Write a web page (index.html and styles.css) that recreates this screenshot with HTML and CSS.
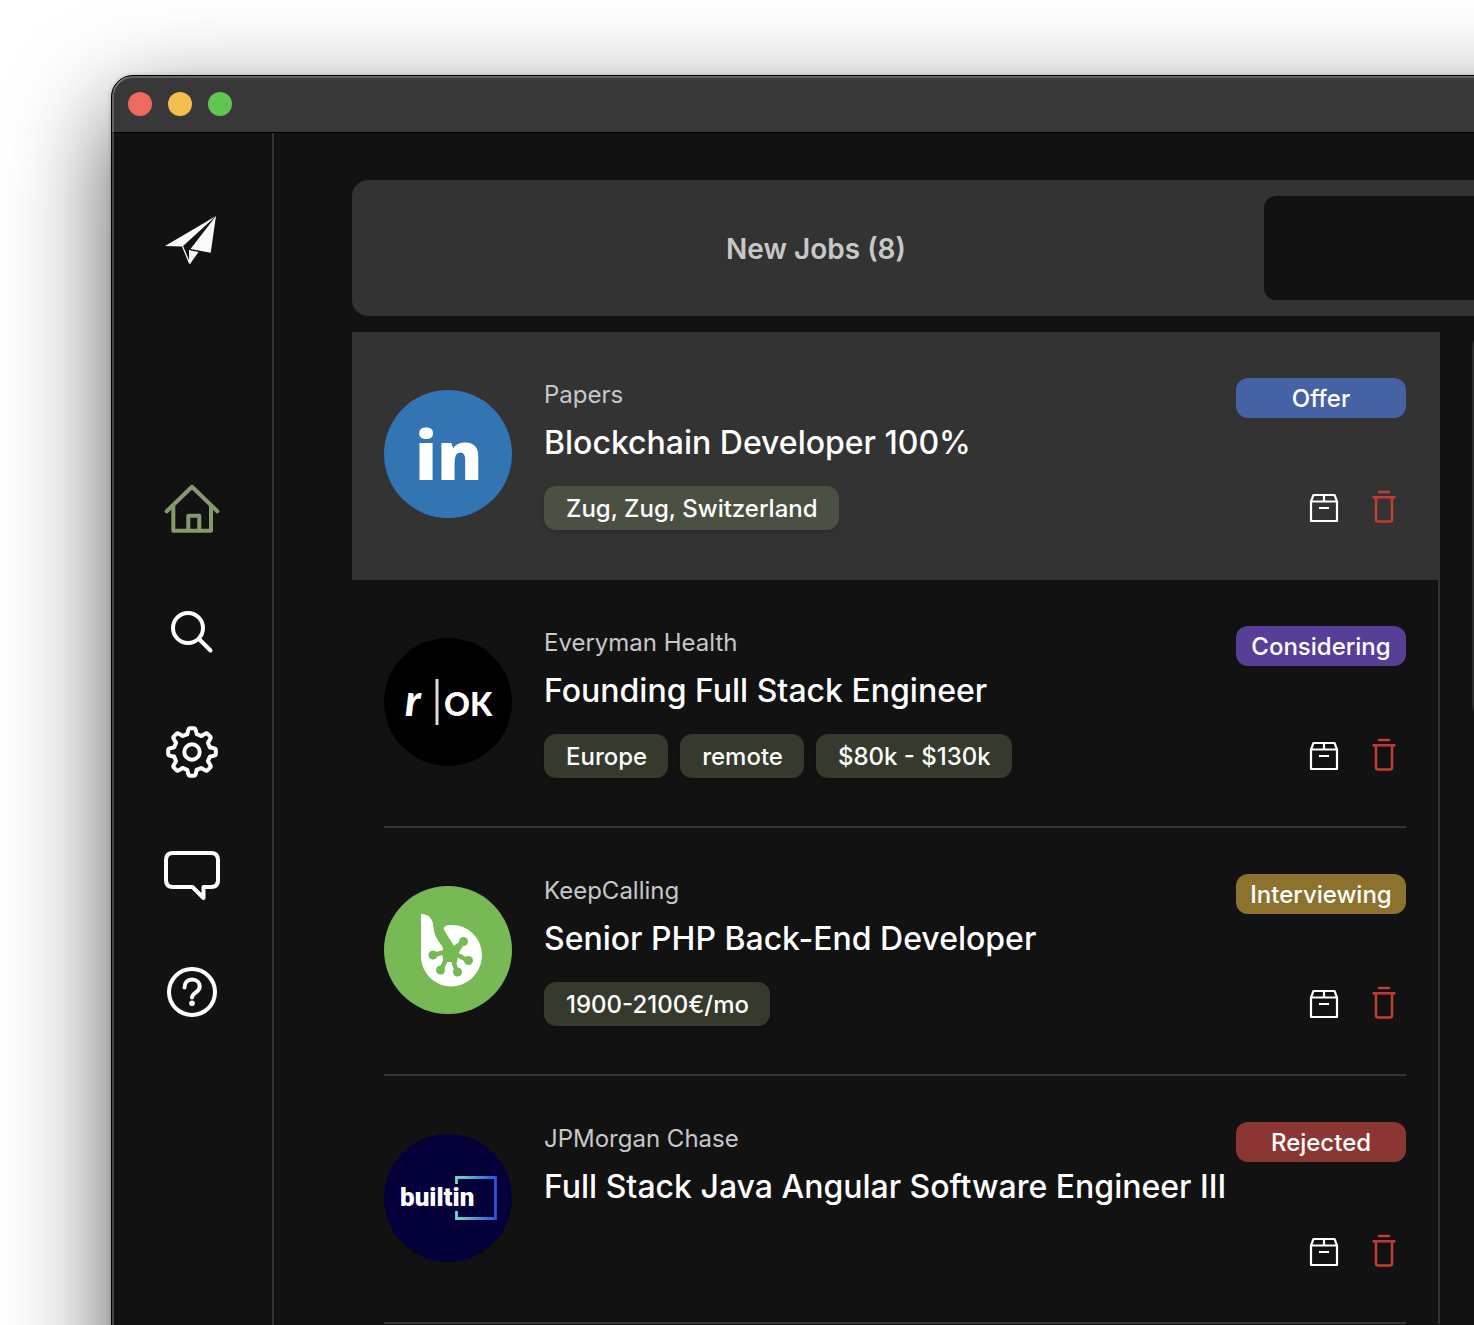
FILE: index.html
```html
<!DOCTYPE html>
<html lang="en">
<head>
<meta charset="utf-8">
<title>Jobs</title>
<link rel="stylesheet" href="styles.css">
</head>
<body>
<svg class="sprite" aria-hidden="true">
  <symbol id="archive" viewBox="0 0 44 44">
    <g fill="none" stroke="currentColor" stroke-width="2.200" stroke-linejoin="round">
      <path d="M9 15.500V35h26V15.500L32.500 9h-21z"/><path d="M9 15.500h26M22 9v6.500M17 22h10"/>
    </g>
  </symbol>
  <symbol id="trash" viewBox="0 0 44 44">
    <g fill="none" stroke="currentColor" stroke-width="2.500" stroke-linejoin="round" stroke-linecap="round">
      <path d="M17 6h10M11.500 11.300h21M14 12v21.500q0 2 2 2h12q2 0 2-2V12"/>
    </g>
  </symbol>
</svg>
<div class="window">
  <header class="titlebar">
    <button class="light close" aria-label="Close"></button>
    <button class="light minimize" aria-label="Minimize"></button>
    <button class="light maximize" aria-label="Maximize"></button>
  </header>
  <div class="app">
    <nav class="sidebar">
      <svg class="logo" viewBox="0 0 64 64" fill="#fafafa">
        <path d="M5 38 56 8 22.500 38.500z"/>
        <path d="M56 8 50.700 44.700 30.500 41z"/>
        <path d="M29.500 42.300 38.500 44 30 56z"/>
        <path d="M22.500 38.200 29.700 55.500V42" fill="none" stroke="#fafafa" stroke-width="1.300"/>
      </svg>
      <ul class="menu">
        <li><a class="active" href="#home" aria-label="Home"><svg viewBox="0 0 64 64"><path d="M6.700 31.300 32 6.800l25.300 24.500M13.300 26v24.700H51V26M28.300 50V35.700h11V50"/></svg></a></li>
        <li><a href="#search" aria-label="Search"><svg viewBox="0 0 64 64"><circle cx="28" cy="28" r="15"/><path d="m39 39 11.500 11.500"/></svg></a></li>
        <li><a href="#settings" aria-label="Settings"><svg viewBox="-32 -32 64 64"><circle r="7.700"/>
          <defs><path id="tooth" d="M-4.800-17.800-3.600-22.300Q-3.200-23.800-1.800-23.800H1.800Q3.200-23.800 3.600-22.300L4.800-17.800 9.200-16"/></defs>
          <use href="#tooth"/><use href="#tooth" transform="rotate(45)"/><use href="#tooth" transform="rotate(90)"/><use href="#tooth" transform="rotate(135)"/><use href="#tooth" transform="rotate(180)"/><use href="#tooth" transform="rotate(225)"/><use href="#tooth" transform="rotate(270)"/><use href="#tooth" transform="rotate(315)"/>
        </svg></a></li>
        <li><a href="#feedback" aria-label="Feedback"><svg viewBox="0 0 64 64"><path d="M13 13h38q7 0 7 7v20q0 7-7 7h-7.500v11L32.500 47H13q-7 0-7-7V20q0-7 7-7z"/></svg></a></li>
        <li><a href="#help" aria-label="Help"><svg viewBox="0 0 64 64"><circle cx="32" cy="32" r="23"/><path d="M24.500 27.500c0-5 3-8 7.500-8s7.700 3 7.700 7c0 6-7.700 6-7.700 11"/><circle class="dot" cx="32" cy="43.300" r="2.800"/></svg></a></li>
      </ul>
    </nav>
    <main class="main">
      <div class="tabs">
        <button class="tab">New Jobs (8)</button>
        <button class="tab current" aria-label="Applied"></button>
        <button class="tab" aria-label="Archived"></button>
      </div>
      <div class="columns">
        <ul class="jobs">
          <li class="job selected">
            <div class="row">
              <svg class="avatar linkedin" viewBox="0 0 128 128"><text x="31" y="90">in</text></svg>
              <div class="info">
                <p class="company">Papers</p>
                <h2 class="title">Blockchain Developer 100%</h2>
                <div class="tags"><span class="tag">Zug, Zug, Switzerland</span></div>
              </div>
              <div class="side">
                <span class="badge offer">Offer</span>
                <div class="actions">
                  <button class="action" aria-label="Archive"><svg><use href="#archive"/></svg></button>
                  <button class="action delete" aria-label="Delete"><svg><use href="#trash"/></svg></button>
                </div>
              </div>
            </div>
          </li>
          <li class="job">
            <div class="row">
              <svg class="avatar rok" viewBox="0 0 128 128"><text class="script" x="21" y="78">r</text><path d="M53 41v46" stroke="#ddd" stroke-width="3"/><text x="60" y="78">OK</text></svg>
              <div class="info">
                <p class="company">Everyman Health</p>
                <h2 class="title">Founding Full Stack Engineer</h2>
                <div class="tags"><span class="tag">Europe</span><span class="tag">remote</span><span class="tag">$80k - $130k</span></div>
              </div>
              <div class="side">
                <span class="badge considering">Considering</span>
                <div class="actions">
                  <button class="action" aria-label="Archive"><svg><use href="#archive"/></svg></button>
                  <button class="action delete" aria-label="Delete"><svg><use href="#trash"/></svg></button>
                </div>
              </div>
            </div>
          </li>
          <li class="job">
            <div class="row">
              <svg class="avatar lime" viewBox="0 0 128 128">
                <path fill="#fff" d="M37 28c7 0 11 4 12 10 1 11 4 16 10 23v15h9V61L60 44c-1-3 1-5 8-5 16 0 30 13 30 30S84 100.500 67.500 100.500 37 87 37 70z"/>
                <path fill="none" stroke="#77b955" stroke-width="4.500" d="M66 65 79 56M66 65 84 74.500M66 65 73 86M66 65 57 84M66 65 49 69"/>
                <path fill="#77b955" d="M53 38c0 12 4 17 6 24l-1 6 2 8 6-3 7 4 1-9 5-8h-9L60 44z"/>
                <g fill="#77b955"><circle cx="79.500" cy="55.500" r="4.500"/><circle cx="84.500" cy="74.500" r="4.500"/><circle cx="73.500" cy="86" r="4.500"/><circle cx="56.500" cy="84" r="4.500"/><circle cx="49" cy="69" r="4.500"/></g>
              </svg>
              <div class="info">
                <p class="company">KeepCalling</p>
                <h2 class="title">Senior PHP Back-End Developer</h2>
                <div class="tags"><span class="tag">1900-2100€/mo</span></div>
              </div>
              <div class="side">
                <span class="badge interviewing">Interviewing</span>
                <div class="actions">
                  <button class="action" aria-label="Archive"><svg><use href="#archive"/></svg></button>
                  <button class="action delete" aria-label="Delete"><svg><use href="#trash"/></svg></button>
                </div>
              </div>
            </div>
          </li>
          <li class="job">
            <div class="row">
              <svg class="avatar builtin" viewBox="0 0 128 128">
                <defs><linearGradient id="frame" gradientUnits="userSpaceOnUse" x1="72" y1="0" x2="113" y2="0"><stop offset="0" stop-color="#73dcc0"/><stop offset="1" stop-color="#2b50d8"/></linearGradient></defs>
                <path d="M72.500 50v-6.500h39v41h-39V77" fill="none" stroke="url(#frame)" stroke-width="2.800"/>
                <text x="16" y="72">builtin</text>
              </svg>
              <div class="info">
                <p class="company">JPMorgan Chase</p>
                <h2 class="title">Full Stack Java Angular Software Engineer III</h2>
                <div class="tags"></div>
              </div>
              <div class="side">
                <span class="badge rejected">Rejected</span>
                <div class="actions">
                  <button class="action" aria-label="Archive"><svg><use href="#archive"/></svg></button>
                  <button class="action delete" aria-label="Delete"><svg><use href="#trash"/></svg></button>
                </div>
              </div>
            </div>
          </li>
        </ul>
        <section class="detail" aria-label="Job details"></section>
      </div>
    </main>
  </div>
</div>
</body>
</html>
```
FILE: styles.css
```css
* {
  box-sizing: border-box;
  margin: 0;
  padding: 0;
}

body {
  height: 100vh;
  overflow: hidden;
  background: #fff;
  color: #fff;
  font-family: Inter, "Liberation Sans", sans-serif;
}

button {
  border: 0;
  background: none;
  color: inherit;
  font: inherit;
}

ul {
  list-style: none;
}

.sprite {
  display: none;
}

/* The window runs off the right and bottom edges of the desktop */
.window {
  position: relative;
  min-height: 110vh;
  margin: 75px -1677px 0 111px;
  border: 1px solid #000;
  border-radius: 22px;
  overflow: hidden;
  background: #121212;
  box-shadow: 0 36px 100px rgba(0, 0, 0, 0.65), 0 0 4px rgba(0, 0, 0, 0.2);
}

.window::after {
  content: "";
  position: absolute;
  inset: 0;
  border-radius: 21px;
  box-shadow: inset 0 2px 0 rgba(255, 255, 255, 0.22), inset 2px 0 0 rgba(255, 255, 255, 0.22);
  pointer-events: none;
}

.titlebar {
  display: flex;
  align-items: center;
  gap: 16px;
  height: 57px;
  padding-left: 16px;
  border-bottom: 1px solid #000;
  background: #383838;
}

.light {
  width: 24px;
  height: 24px;
  border-radius: 50%;
}

.close { background: #ed6a5e; }
.minimize { background: #f5bf4f; }
.maximize { background: #61c554; }

.app {
  display: flex;
  min-height: 110vh;
}

.sidebar {
  display: flex;
  flex: none;
  flex-direction: column;
  align-items: center;
  gap: 208px;
  width: 160px;
  padding-top: 75px;
}

.logo,
.menu svg {
  display: block;
  width: 64px;
  height: 64px;
}

.menu {
  display: grid;
  gap: 56px;
}

.menu a {
  display: block;
  color: #fff;
}

.menu .active {
  color: #87996b;
}

.menu svg {
  fill: none;
  stroke: currentColor;
  stroke-width: 4px;
  stroke-linecap: round;
  stroke-linejoin: round;
}

.menu .dot {
  fill: currentColor;
  stroke: none;
}

.main {
  flex: 1;
  min-width: 0;
  padding: 47px 78px 0;
  border-left: 2px solid #333;
}

.tabs {
  display: grid;
  grid-template-columns: repeat(3, 1fr);
  padding: 16px;
  border-radius: 16px;
  background: #333;
}

.tab {
  height: 104px;
  padding-top: 2px;
  border-radius: 12px;
  color: #c8c8c8;
  font-size: 28px;
  font-weight: 600;
}

.tab.current {
  background: #121212;
}

.columns {
  display: grid;
  grid-template-columns: 2fr 3fr;
  align-items: start;
  margin-top: 16px;
}

.jobs {
  border-right: 2px solid #333;
}

.job {
  padding: 0 32px;
}

.job.selected {
  background: #333;
}

.row {
  display: flex;
  padding: 46px 0 48px;
  border-bottom: 2px solid #333;
}

.avatar {
  flex: none;
  width: 128px;
  height: 128px;
  margin: 12px 32px 0 0;
  border-radius: 50%;
  fill: #fff;
}

.linkedin {
  background: #3375b2;
  font: 800 68px "Open Sans", sans-serif;
}

.rok {
  background: #000;
  font: 900 32px Lato, sans-serif;
}

.script {
  font-size: 44px;
  font-style: italic;
}

.lime {
  background: #77b955;
}

.builtin {
  background: #040039;
  font: 900 26px Roboto, "Liberation Sans", sans-serif;
}

.info {
  flex: 1;
  min-width: 0;
}

.company {
  color: #c7c7cc;
  font-size: 24px;
  line-height: 34px;
}

.title {
  font-size: 32px;
  font-weight: 500;
  line-height: 62px;
  white-space: nowrap;
}

.tags {
  display: flex;
  gap: 12px;
  min-height: 44px;
  margin-top: 12px;
}

.tag {
  padding: 2px 21px 0 22px;
  border-radius: 12px;
  background: #353a2d;
  box-shadow: 0 2px 4px rgba(0, 0, 0, 0.15);
  font-size: 24px;
  font-weight: 500;
  line-height: 42px;
}

.selected .tag {
  background: #4b5142;
}

.side {
  display: flex;
  flex: none;
  flex-direction: column;
  align-items: flex-end;
  justify-content: space-between;
}

.badge {
  width: 170px;
  padding-top: 2px;
  border-radius: 12px;
  font-size: 24px;
  font-weight: 500;
  line-height: 38px;
  text-align: center;
}

.offer { background: #4562a5; }
.considering { background: #573f98; }
.interviewing { background: #8c722c; }
.rejected { background: #8c3634; }

.actions {
  display: flex;
  gap: 16px;
}

.action,
.action svg {
  display: block;
  width: 44px;
  height: 44px;
}

.delete {
  color: #c23c35;
}

.detail {
  height: 388px;
  margin-left: 32px;
  border-radius: 16px;
  background: #2b2b2b;
}
```
